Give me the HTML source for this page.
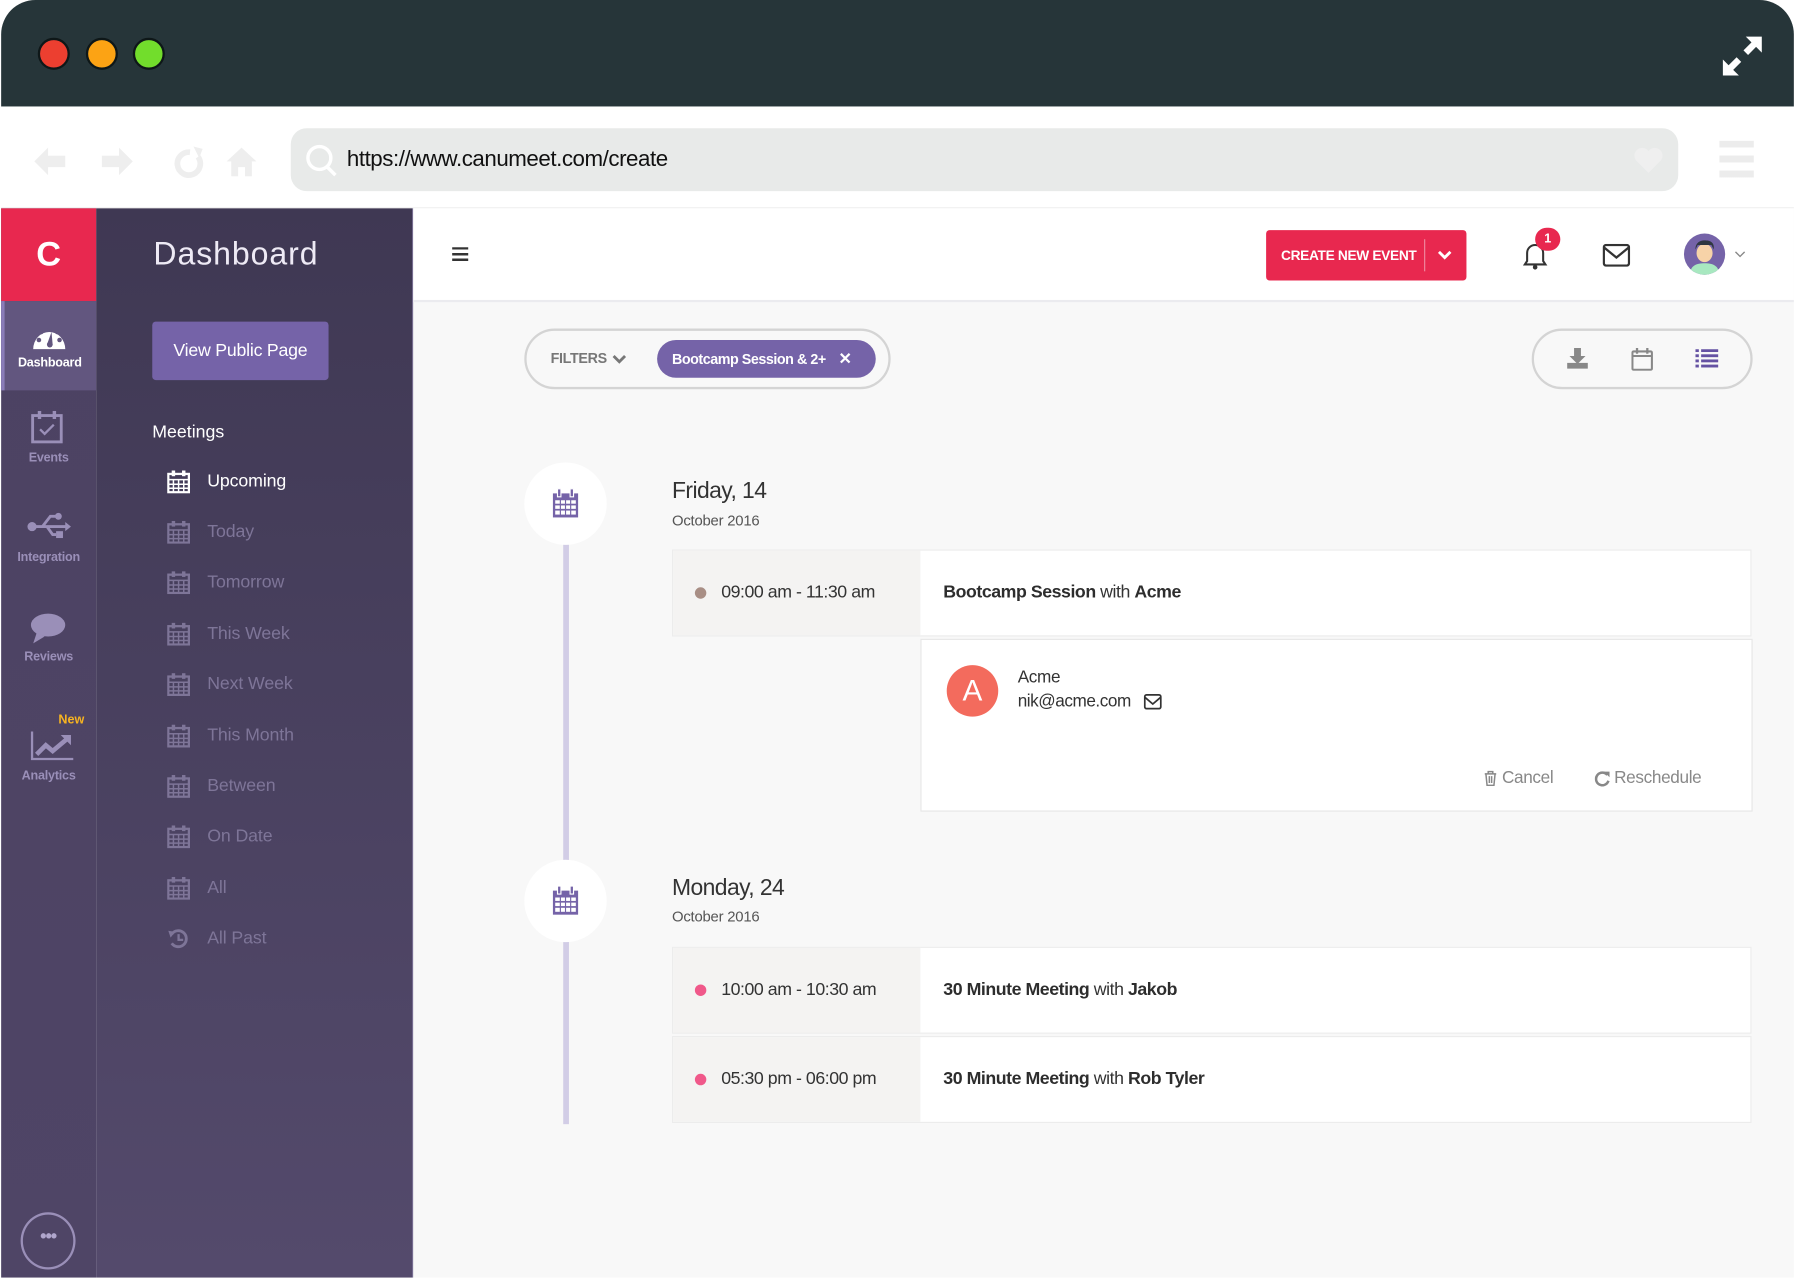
<!DOCTYPE html>
<html><head><meta charset="utf-8"><style>
*{box-sizing:border-box;margin:0;padding:0}
html,body{width:1795px;height:1278px;overflow:hidden;background:#fff;font-family:"Liberation Sans",sans-serif}
#w{position:absolute;left:0;top:0;width:1568px;height:1116px;transform:scale(1.14477);transform-origin:0 0}
.a{position:absolute}
.tb{left:1px;top:0;width:1566px;height:93px;background:#263539;border-radius:30px 30px 0 0}
.dot{width:28px;height:28px;border-radius:50%;border:2px solid #0e1718;top:33px}
.nav{left:1px;top:93px;width:1566px;height:89px;background:#fff;border-bottom:1px solid #eee}
.url{left:254px;top:112px;width:1212px;height:55px;background:#e8eae9;border-radius:14px}
.rail{left:1px;top:182px;width:83px;height:934px;background:linear-gradient(#4c4262,#4f4566)}
.side{left:84px;top:182px;width:277px;height:934px;background:linear-gradient(#3f3853,#544a6c);border-right:1px solid #6a5f86}
.ri{width:83px;text-align:center;color:#9a8fb8;font-size:11px;font-weight:bold;letter-spacing:-0.2px}
.mi{left:146px;font-size:15.5px;color:#7e7598;display:flex;align-items:center;gap:15px;letter-spacing:-0.1px}
.main{left:361px;top:182px;width:1206px;height:934px;background:#f8f8f8}
.hdr{left:361px;top:182px;width:1206px;height:82px;background:#fff;border-bottom:2px solid #ebebef}
.pill{border:2px solid #d4d4d4;border-radius:27px;height:53px;top:287px}
.circ{width:72px;height:72px;border-radius:50%;background:#fff;display:flex;align-items:center;justify-content:center}
.row{left:587px;width:943px;height:76px;display:flex;border:1px solid #ececec;background:#fff}
.row .t{width:216px;background:#f4f3f2;display:flex;align-items:center;padding-left:19px;font-size:15.5px;color:#333;letter-spacing:-0.4px}
.row .t i{width:10px;height:10px;border-radius:50%;margin-right:13px;display:inline-block}
.row .n{display:flex;align-items:center;padding-left:20px;font-size:15.5px;color:#333;letter-spacing:-0.4px}
b{font-weight:bold;color:#2d2d2d}
</style></head><body><div id="w">
<div class="a tb"></div>
<div class="a dot" style="left:33px;background:#ec3f30"></div>
<div class="a dot" style="left:75px;background:#fca314"></div>
<div class="a dot" style="left:116px;background:#72dd2c"></div>
<svg class="a" style="left:1503px;top:30px" width="38" height="38" viewBox="0 0 38 38"><path d="M22 2h14v14l-5-5-7 7-4-4 7-7z M16 36H2V22l5 5 7-7 4 4-7 7z" fill="#fff"/></svg>
<div class="a nav"></div>
<svg class="a" style="left:28px;top:126px" width="200" height="30" viewBox="0 0 200 30"><path d="M2 15L14 3v7h15v10H14v7z" fill="#eee"/><path d="M88 15L76 3v7H61v10h15v7z" fill="#eee"/><path d="M138 7a10 10 0 1 0 7 4" stroke="#eee" stroke-width="5" fill="none"/><path d="M141 2l8 2-3 8z" fill="#eee"/><path d="M170 15l13-12 13 12h-4v13h-6v-8h-6v8h-6V15z" fill="#eee"/></svg>
<div class="a url"></div>
<svg class="a" style="left:266px;top:125px" width="30" height="30"><circle cx="13" cy="13" r="10" stroke="#fff" stroke-width="3" fill="none"/><path d="M20 21l7 7" stroke="#fff" stroke-width="3"/></svg>
<div class="a" style="left:303px;top:128px;font-size:19.5px;color:#111;letter-spacing:-0.4px">https://www.canumeet.com/create</div>
<svg class="a" style="left:1427px;top:128px" width="26" height="24"><path d="M13 23L2 12a6 6 0 0 1 11-8 6 6 0 0 1 11 8z" fill="#efefef"/></svg>
<div class="a" style="left:1502px;top:123px;width:30px;height:32px;background:linear-gradient(#ececec 0 6px,transparent 6px 13px,#ececec 13px 19px,transparent 19px 26px,#ececec 26px)"></div>

<div class="a rail"></div>
<div class="a side"></div>
<div class="a" style="left:1px;top:182px;width:83px;height:81px;background:#e8284f;color:#fff;font-size:30px;font-weight:bold;text-align:center;line-height:81px">C</div>
<div class="a" style="left:1px;top:263px;width:83px;height:78px;background:#62567f;border-left:3px solid #8a7cb8"></div>
<svg class="a" style="left:28px;top:280px" width="30" height="26" viewBox="0 0 30 26"><path d="M1 25A14 15 0 1 1 29 25z" fill="#fff"/><g fill="#62567f"><circle cx="6" cy="17" r="2"/><circle cx="8" cy="10" r="2"/><circle cx="15" cy="6" r="2"/><circle cx="22" cy="10" r="2"/><circle cx="24" cy="17" r="2"/><path d="M13 21l4-11 1 11z"/><circle cx="15.5" cy="21" r="2.5"/></g></svg>
<div class="a ri" style="left:2px;top:311px;color:#fff">Dashboard</div>
<svg class="a" style="left:27px;top:358px" width="28" height="30" viewBox="0 0 28 30"><rect x="1.5" y="5" width="25" height="23" fill="none" stroke="#9a8fb8" stroke-width="2.5"/><rect x="6" y="1" width="3" height="7" fill="#9a8fb8"/><rect x="19" y="1" width="3" height="7" fill="#9a8fb8"/><path d="M8 17l4 4 8-8" stroke="#9a8fb8" stroke-width="2" fill="none"/></svg>
<div class="a ri" style="left:1px;top:394px">Events</div>
<svg class="a" style="left:23px;top:446px" width="40" height="26" viewBox="0 0 40 26"><circle cx="5" cy="14" r="4" fill="#9a8fb8"/><path d="M5 14h32M14 14l7-9h5M18 14l5 7h3" stroke="#9a8fb8" stroke-width="2.5" fill="none"/><circle cx="28" cy="5" r="3" fill="#9a8fb8"/><rect x="26" y="18" width="6" height="6" fill="#9a8fb8"/><path d="M34 10l5 4-5 4z" fill="#9a8fb8"/></svg>
<div class="a ri" style="left:1px;top:481px">Integration</div>
<svg class="a" style="left:26px;top:535px" width="32" height="28" viewBox="0 0 32 28"><ellipse cx="16" cy="11" rx="15" ry="10" fill="#9a8fb8"/><path d="M6 18l-3 9 10-6z" fill="#9a8fb8"/></svg>
<div class="a ri" style="left:1px;top:568px">Reviews</div>
<div class="a" style="left:51px;top:623px;font-size:11px;font-weight:bold;color:#f6b321">New</div>
<svg class="a" style="left:26px;top:637px" width="40" height="28" viewBox="0 0 40 28"><path d="M2 2v24h36" stroke="#9a8fb8" stroke-width="2" fill="none"/><path d="M6 22l8-8 6 5 12-10" stroke="#9a8fb8" stroke-width="4" fill="none"/><path d="M27 5h9v9z" fill="#9a8fb8"/></svg>
<div class="a ri" style="left:1px;top:672px">Analytics</div>
<div class="a" style="left:18px;top:1059px;width:48px;height:50px;border:2px solid #9a8fb8;border-radius:50%;color:#b0a6cc;font-size:16px;text-align:center;line-height:40px;font-weight:bold;letter-spacing:-1px">•••</div>

<div class="a" style="left:134px;top:206px;font-size:28px;color:#eeeaf5;letter-spacing:0.8px">Dashboard</div>
<div class="a" style="left:133px;top:281px;width:154px;height:51px;background:#7563a8;border-radius:3px;color:#fff;font-size:15.5px;text-align:center;line-height:51px;letter-spacing:-0.2px">View Public Page</div>
<div class="a" style="left:133px;top:369px;font-size:15.5px;color:#fff">Meetings</div>
<div class="a mi" style="top:411px;color:#fff"><svg width="20" height="20" viewBox="0 0 20 20"><rect x="1" y="3" width="18" height="16" fill="none" stroke="currentColor" stroke-width="2"/><path d="M1 8h18M1 12h18M1 15.5h18M5.5 8v11M10 8v11M14.5 8v11" stroke="currentColor" stroke-width="1.3"/><rect x="4" y="0" width="3" height="5" fill="currentColor"/><rect x="13" y="0" width="3" height="5" fill="currentColor"/></svg>Upcoming</div>
<div class="a mi" style="top:455px"><svg width="20" height="20" viewBox="0 0 20 20"><rect x="1" y="3" width="18" height="16" fill="none" stroke="currentColor" stroke-width="2"/><path d="M1 8h18M1 12h18M1 15.5h18M5.5 8v11M10 8v11M14.5 8v11" stroke="currentColor" stroke-width="1.3"/><rect x="4" y="0" width="3" height="5" fill="currentColor"/><rect x="13" y="0" width="3" height="5" fill="currentColor"/></svg>Today</div>
<div class="a mi" style="top:499px"><svg width="20" height="20" viewBox="0 0 20 20"><rect x="1" y="3" width="18" height="16" fill="none" stroke="currentColor" stroke-width="2"/><path d="M1 8h18M1 12h18M1 15.5h18M5.5 8v11M10 8v11M14.5 8v11" stroke="currentColor" stroke-width="1.3"/><rect x="4" y="0" width="3" height="5" fill="currentColor"/><rect x="13" y="0" width="3" height="5" fill="currentColor"/></svg>Tomorrow</div>
<div class="a mi" style="top:544px"><svg width="20" height="20" viewBox="0 0 20 20"><rect x="1" y="3" width="18" height="16" fill="none" stroke="currentColor" stroke-width="2"/><path d="M1 8h18M1 12h18M1 15.5h18M5.5 8v11M10 8v11M14.5 8v11" stroke="currentColor" stroke-width="1.3"/><rect x="4" y="0" width="3" height="5" fill="currentColor"/><rect x="13" y="0" width="3" height="5" fill="currentColor"/></svg>This Week</div>
<div class="a mi" style="top:588px"><svg width="20" height="20" viewBox="0 0 20 20"><rect x="1" y="3" width="18" height="16" fill="none" stroke="currentColor" stroke-width="2"/><path d="M1 8h18M1 12h18M1 15.5h18M5.5 8v11M10 8v11M14.5 8v11" stroke="currentColor" stroke-width="1.3"/><rect x="4" y="0" width="3" height="5" fill="currentColor"/><rect x="13" y="0" width="3" height="5" fill="currentColor"/></svg>Next Week</div>
<div class="a mi" style="top:633px"><svg width="20" height="20" viewBox="0 0 20 20"><rect x="1" y="3" width="18" height="16" fill="none" stroke="currentColor" stroke-width="2"/><path d="M1 8h18M1 12h18M1 15.5h18M5.5 8v11M10 8v11M14.5 8v11" stroke="currentColor" stroke-width="1.3"/><rect x="4" y="0" width="3" height="5" fill="currentColor"/><rect x="13" y="0" width="3" height="5" fill="currentColor"/></svg>This Month</div>
<div class="a mi" style="top:677px"><svg width="20" height="20" viewBox="0 0 20 20"><rect x="1" y="3" width="18" height="16" fill="none" stroke="currentColor" stroke-width="2"/><path d="M1 8h18M1 12h18M1 15.5h18M5.5 8v11M10 8v11M14.5 8v11" stroke="currentColor" stroke-width="1.3"/><rect x="4" y="0" width="3" height="5" fill="currentColor"/><rect x="13" y="0" width="3" height="5" fill="currentColor"/></svg>Between</div>
<div class="a mi" style="top:721px"><svg width="20" height="20" viewBox="0 0 20 20"><rect x="1" y="3" width="18" height="16" fill="none" stroke="currentColor" stroke-width="2"/><path d="M1 8h18M1 12h18M1 15.5h18M5.5 8v11M10 8v11M14.5 8v11" stroke="currentColor" stroke-width="1.3"/><rect x="4" y="0" width="3" height="5" fill="currentColor"/><rect x="13" y="0" width="3" height="5" fill="currentColor"/></svg>On Date</div>
<div class="a mi" style="top:766px"><svg width="20" height="20" viewBox="0 0 20 20"><rect x="1" y="3" width="18" height="16" fill="none" stroke="currentColor" stroke-width="2"/><path d="M1 8h18M1 12h18M1 15.5h18M5.5 8v11M10 8v11M14.5 8v11" stroke="currentColor" stroke-width="1.3"/><rect x="4" y="0" width="3" height="5" fill="currentColor"/><rect x="13" y="0" width="3" height="5" fill="currentColor"/></svg>All</div>
<div class="a mi" style="top:810px"><svg width="20" height="20" viewBox="0 0 20 20"><path d="M4 6a7 7 0 1 1 0 8" stroke="currentColor" stroke-width="2.5" fill="none"/><path d="M1 3l6 1-4 5z" fill="currentColor"/><path d="M10 6v5h4" stroke="currentColor" stroke-width="2" fill="none"/></svg>All Past</div>

<div class="a main"></div>
<div class="a hdr"></div>
<div class="a" style="left:395px;top:216px;width:14px;height:12px;background:linear-gradient(#333 0 2px,transparent 2px 5px,#333 5px 7px,transparent 7px 10px,#333 10px)"></div>
<div class="a" style="left:1106px;top:201px;width:175px;height:44px;background:#e8284f;border-radius:3px;color:#fff;font-size:12px;font-weight:bold;line-height:44px;padding-left:13px;letter-spacing:-0.3px">CREATE NEW EVENT</div>
<div class="a" style="left:1244px;top:209px;width:1px;height:28px;background:#f08aa0"></div>
<svg class="a" style="left:1256px;top:218px" width="12" height="10"><path d="M1 2l5 5 5-5" stroke="#fff" stroke-width="2.5" fill="none"/></svg>
<svg class="a" style="left:1329px;top:210px" width="24" height="26" viewBox="0 0 24 26"><path d="M3 21h18l-2-3V11a7 7 0 0 0-14 0v7z" fill="none" stroke="#333" stroke-width="1.8"/><circle cx="12" cy="23.5" r="2" fill="#333"/></svg>
<div class="a" style="left:1341px;top:199px;width:22px;height:20px;background:#e8284f;border-radius:10px;color:#fff;font-size:11px;font-weight:bold;text-align:center;line-height:20px">1</div>
<svg class="a" style="left:1400px;top:213px" width="24" height="20"><rect x="1" y="1" width="22" height="18" rx="2" fill="none" stroke="#333" stroke-width="2"/><path d="M1 3l11 9 11-9" stroke="#333" stroke-width="2" fill="none"/></svg>
<svg class="a" style="left:1470px;top:203px" width="38" height="38" viewBox="0 0 38 38"><clipPath id="c"><circle cx="19" cy="19" r="18"/></clipPath><circle cx="19" cy="19" r="18" fill="#7563a8"/><g clip-path="url(#c)"><path d="M6 38c0-9 6-11 13-11s13 2 13 11z" fill="#a8e8c0"/><ellipse cx="19" cy="18" rx="7" ry="8" fill="#f7d3a8"/><path d="M11 15c0-6 4-8 8-8s9 1 8 8l-2-4h-12z" fill="#2f3740"/></g></svg>
<svg class="a" style="left:1515px;top:219px" width="10" height="7"><path d="M1 1l4 4 4-4" stroke="#888" stroke-width="1.2" fill="none"/></svg>

<div class="a pill" style="left:458px;width:320px"></div>
<div class="a" style="left:481px;top:306px;font-size:12.5px;color:#777;font-weight:bold;letter-spacing:-0.3px">FILTERS</div>
<svg class="a" style="left:535px;top:310px" width="12" height="9"><path d="M1 1l5 5 5-5" stroke="#777" stroke-width="2.5" fill="none"/></svg>
<div class="a" style="left:574px;top:297px;width:191px;height:33px;background:#7563a8;border-radius:17px;color:#fff;font-size:12.5px;font-weight:bold;line-height:33px;padding-left:13px;letter-spacing:-0.4px">Bootcamp Session &amp; 2+ <span style="margin-left:8px;font-size:14px">✕</span></div>
<div class="a pill" style="left:1338px;width:193px"></div>
<svg class="a" style="left:1368px;top:303px" width="20" height="20" viewBox="0 0 20 20"><path d="M7 1h6v7h4l-7 7-7-7h4z" fill="#888"/><rect x="1" y="14" width="18" height="5" fill="#888"/></svg>
<svg class="a" style="left:1425px;top:303px" width="19" height="21" viewBox="0 0 19 21"><rect x="1" y="4" width="17" height="16" rx="1" fill="none" stroke="#888" stroke-width="1.8"/><path d="M1 8h17" stroke="#888" stroke-width="1.8"/><rect x="4" y="1" width="2" height="5" fill="#888"/><rect x="13" y="1" width="2" height="5" fill="#888"/></svg>
<svg class="a" style="left:1481px;top:305px" width="20" height="16"><g fill="#6552a3"><rect x="0" y="0" width="3" height="2.5"/><rect x="5" y="0" width="15" height="2.5"/><rect x="0" y="4.5" width="3" height="2.5"/><rect x="5" y="4.5" width="15" height="2.5"/><rect x="0" y="9" width="3" height="2.5"/><rect x="5" y="9" width="15" height="2.5"/><rect x="0" y="13.5" width="3" height="2.5"/><rect x="5" y="13.5" width="15" height="2.5"/></g></svg>

<div class="a" style="left:492px;top:470px;width:5px;height:512px;background:#d2cde6"></div>
<div class="a circ" style="left:458px;top:404px"><svg width="24" height="26" viewBox="0 0 24 26"><rect x="1" y="4" width="22" height="21" fill="#7563a8"/><g fill="#fff"><rect x="3" y="10" width="4" height="3"/><rect x="8" y="10" width="3.5" height="3"/><rect x="12.5" y="10" width="3.5" height="3"/><rect x="17" y="10" width="4" height="3"/><rect x="3" y="14.5" width="4" height="3"/><rect x="8" y="14.5" width="3.5" height="3"/><rect x="12.5" y="14.5" width="3.5" height="3"/><rect x="17" y="14.5" width="4" height="3"/><rect x="3" y="19" width="4" height="3.5"/><rect x="8" y="19" width="3.5" height="3.5"/><rect x="12.5" y="19" width="3.5" height="3.5"/><rect x="17" y="19" width="4" height="3.5"/></g><rect x="5" y="0" width="3" height="7" fill="#7563a8" stroke="#fff"/><rect x="16" y="0" width="3" height="7" fill="#7563a8" stroke="#fff"/></svg></div>
<div class="a circ" style="left:458px;top:751px"><svg width="24" height="26" viewBox="0 0 24 26"><rect x="1" y="4" width="22" height="21" fill="#7563a8"/><g fill="#fff"><rect x="3" y="10" width="4" height="3"/><rect x="8" y="10" width="3.5" height="3"/><rect x="12.5" y="10" width="3.5" height="3"/><rect x="17" y="10" width="4" height="3"/><rect x="3" y="14.5" width="4" height="3"/><rect x="8" y="14.5" width="3.5" height="3"/><rect x="12.5" y="14.5" width="3.5" height="3"/><rect x="17" y="14.5" width="4" height="3"/><rect x="3" y="19" width="4" height="3.5"/><rect x="8" y="19" width="3.5" height="3.5"/><rect x="12.5" y="19" width="3.5" height="3.5"/><rect x="17" y="19" width="4" height="3.5"/></g><rect x="5" y="0" width="3" height="7" fill="#7563a8" stroke="#fff"/><rect x="16" y="0" width="3" height="7" fill="#7563a8" stroke="#fff"/></svg></div>

<div class="a" style="left:587px;top:418px;font-size:20px;color:#333;letter-spacing:-0.5px">Friday, 14</div>
<div class="a" style="left:587px;top:447px;font-size:13px;color:#555;letter-spacing:-0.2px">October 2016</div>
<div class="a row" style="top:480px"><div class="t"><i style="background:#a88e85"></i>09:00 am - 11:30 am</div><div class="n"><b>Bootcamp Session</b>&nbsp;with&nbsp;<b>Acme</b></div></div>
<div class="a" style="left:804px;top:558px;width:727px;height:151px;background:#fff;border:1px solid #e6e6e6"></div>
<div class="a" style="left:827px;top:581px;width:45px;height:45px;border-radius:50%;background:#f36b5d;color:#fff;font-size:26px;text-align:center;line-height:45px">A</div>
<div class="a" style="left:889px;top:583px;font-size:15px;color:#333;letter-spacing:-0.3px">Acme</div>
<div class="a" style="left:889px;top:604px;font-size:15px;color:#333;letter-spacing:-0.4px">nik@acme.com</div>
<svg class="a" style="left:999px;top:606px" width="16" height="14"><rect x="1" y="1" width="14" height="12" rx="1.5" fill="none" stroke="#333" stroke-width="1.5"/><path d="M1 3l7 6 7-6" stroke="#333" stroke-width="1.5" fill="none"/></svg>
<svg class="a" style="left:1296px;top:673px" width="12" height="14" viewBox="0 0 12 14"><path d="M1 3h10M4 3V1h4v2M2 3l1 10h6l1-10M5 5v6M7 5v6" stroke="#888" stroke-width="1.3" fill="none"/></svg>
<div class="a" style="left:1312px;top:671px;font-size:15px;color:#888;letter-spacing:-0.3px">Cancel</div>
<svg class="a" style="left:1393px;top:673px" width="14" height="14" viewBox="0 0 14 14"><path d="M11 4a5.5 5.5 0 1 0 1 5" stroke="#888" stroke-width="2.2" fill="none"/><path d="M8 1h5v5z" fill="#888"/></svg>
<div class="a" style="left:1410px;top:671px;font-size:15px;color:#888;letter-spacing:-0.3px">Reschedule</div>

<div class="a" style="left:587px;top:765px;font-size:20px;color:#333;letter-spacing:-0.5px">Monday, 24</div>
<div class="a" style="left:587px;top:793px;font-size:13px;color:#555;letter-spacing:-0.2px">October 2016</div>
<div class="a row" style="top:827px"><div class="t"><i style="background:#f0588a"></i>10:00 am - 10:30 am</div><div class="n"><b>30 Minute Meeting</b>&nbsp;with&nbsp;<b>Jakob</b></div></div>
<div class="a row" style="top:905px"><div class="t"><i style="background:#f0588a"></i>05:30 pm - 06:00 pm</div><div class="n"><b>30 Minute Meeting</b>&nbsp;with&nbsp;<b>Rob Tyler</b></div></div>
</div></body></html>
